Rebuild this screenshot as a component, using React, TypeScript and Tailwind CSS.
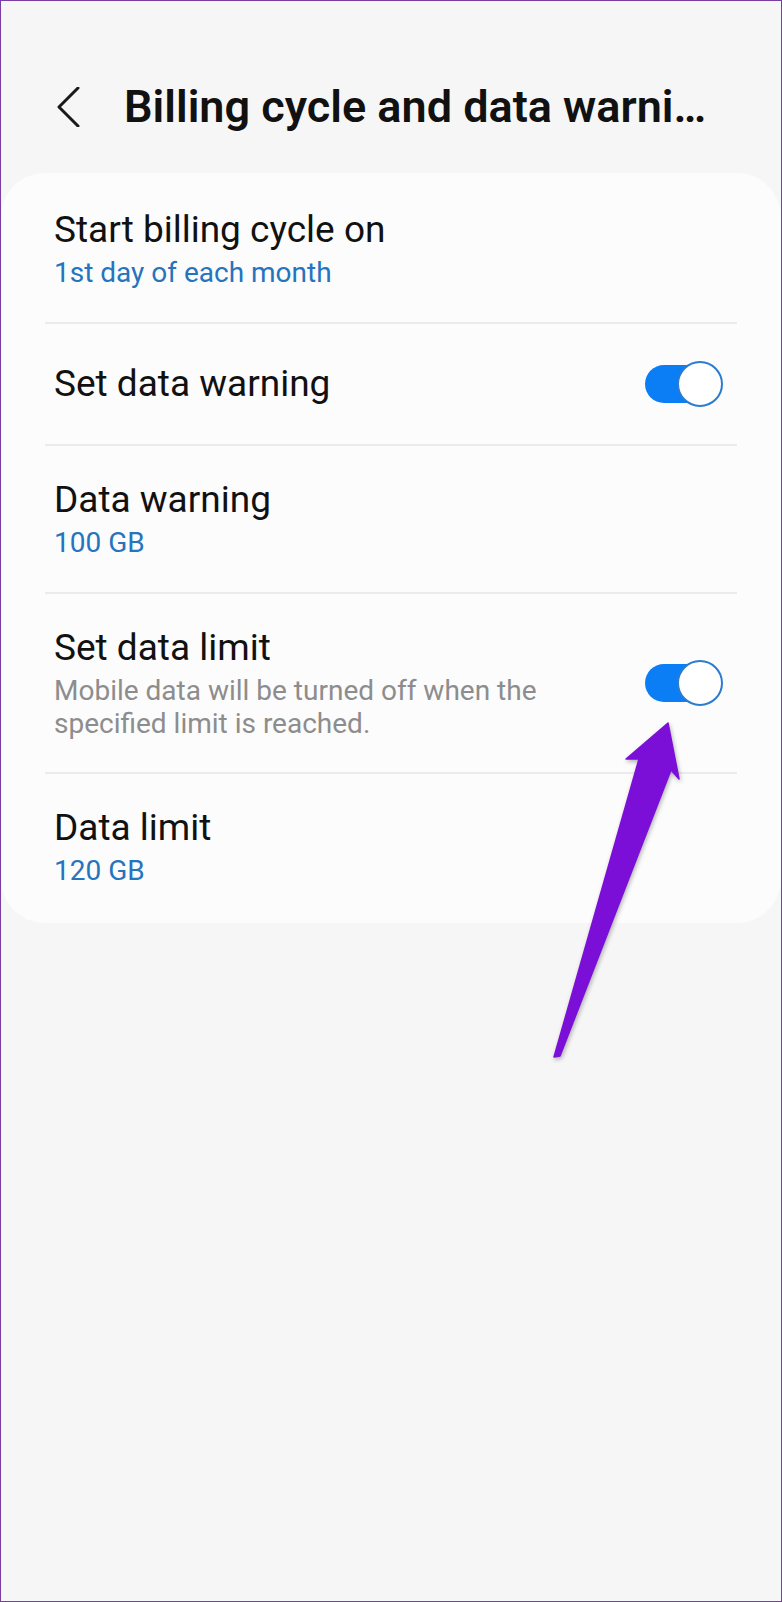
import React from "react";

const Toggle = () => {
  return (
    <div className="relative w-[78px] h-[46px] shrink-0">
      <div className="absolute left-0 top-[4px] h-[38px] w-[66px] rounded-full bg-[#0b7ef6]" />
      <div className="absolute right-0 top-0 w-[46px] h-[46px] rounded-full bg-white border-[2.5px] border-[#2b7bd0]" />
    </div>
  );
};

const Divider = () => <div className="mx-[44px] h-[2px] bg-[#ebebeb]" />;

const Row = ({
  title,
  value,
  note,
  toggle,
  className = "py-[32px]",
}: {
  title: string;
  value?: string;
  note?: string;
  toggle?: boolean;
  className?: string;
}) => {
  return (
    <div className={`flex items-center pl-[53px] pr-[58px] ${className}`}>
      <div className="flex flex-1 flex-col gap-[4px] pr-[40px]">
        <span className="text-[37px] leading-[44px] text-[#111111]">
          {title}
        </span>
        {value && (
          <span className="text-[28px] leading-[34px] text-[#2574bd]">
            {value}
          </span>
        )}
        {note && (
          <span className="text-[28px] leading-[33px] text-[#8d8d8d]">
            {note}
          </span>
        )}
      </div>
      {toggle && <Toggle />}
    </div>
  );
};

export default function App() {
  return (
    <div className="relative min-h-screen bg-[#f6f6f6] border border-[#7a3ea3] font-['Roboto',sans-serif]">
      <header className="flex items-center pt-[79px] pl-[55px]">
        <svg
          width="24"
          height="40"
          viewBox="0 0 24 40"
          fill="none"
          stroke="#1a1a1a"
          strokeWidth="3"
          strokeLinecap="round"
          strokeLinejoin="round"
        >
          <path d="M22 1 L3 20 L22 39" />
        </svg>
        <h1 className="ml-[44px] whitespace-nowrap text-[45px] leading-[53px] font-semibold text-[#111111]">
          Billing cycle and data warni…
        </h1>
      </header>

      <section className="mt-[40px] rounded-[44px] bg-[#fcfcfc] pt-[3px]">
        <Row title="Start billing cycle on" value="1st day of each month" />
        <Divider />
        <Row title="Set data warning" toggle className="py-[37px]" />
        <Divider />
        <Row title="Data warning" value="100 GB" />
        <Divider />
        <Row
          title="Set data limit"
          note="Mobile data will be turned off when the specified limit is reached."
          toggle
        />
        <Divider />
        <Row title="Data limit" value="120 GB" className="pt-[32px] pb-[35px]" />
      </section>

      {/* pointer arrow drawn over the list */}
      <svg
        className="absolute left-[544px] top-[714px] drop-shadow-[1px_2px_2px_rgba(0,0,0,0.3)]"
        width="145"
        height="350"
        viewBox="0 0 145 350"
      >
        <polygon
          points="123,8 134,64 126,55 15,341 9,342 94,44 81,44"
          fill="#7b0fd8"
          stroke="#7b0fd8"
          strokeWidth="1.5"
          strokeLinejoin="round"
        />
      </svg>
    </div>
  );
}
